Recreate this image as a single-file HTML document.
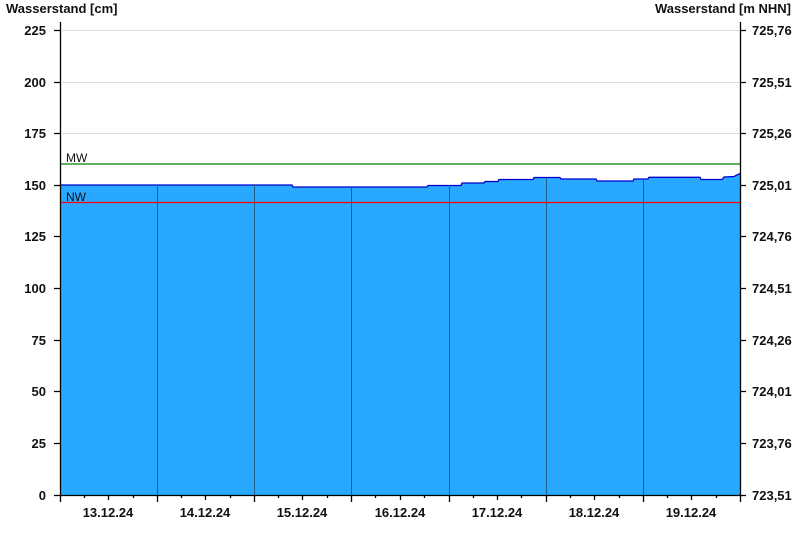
<!DOCTYPE html>
<html><head><style>body{margin:0;background:#fff}svg{display:block}text{font-family:"Liberation Sans",Arial,sans-serif;font-size:13px;font-weight:bold;fill:#111}</style></head><body>
<svg width="800" height="550" xmlns="http://www.w3.org/2000/svg">
<g stroke="#dcdcdc" stroke-width="1">
<line x1="60" x2="740" y1="30.5" y2="30.5"/><line x1="60" x2="740" y1="82.5" y2="82.5"/><line x1="60" x2="740" y1="133.5" y2="133.5"/>
</g>
<path d="M60,185 L292,185 L293,187 L427,187 L428,185.5 L461,185.5 L462,183 L484,183 L485,181.5 L498,181.5 L499,179.5 L533,179.5 L534,177.5 L560,177.5 L561,179 L596,179 L597,181 L633,181 L634,179 L648,179 L649,177.3 L700,177.3 L701,179.5 L722,179.5 L724,177 L734,176.5 L740,173.5 L740,495 L60,495 Z" fill="#29a8ff"/>
<path d="M60,185 L292,185 L293,187 L427,187 L428,185.5 L461,185.5 L462,183 L484,183 L485,181.5 L498,181.5 L499,179.5 L533,179.5 L534,177.5 L560,177.5 L561,179 L596,179 L597,181 L633,181 L634,179 L648,179 L649,177.3 L700,177.3 L701,179.5 L722,179.5 L724,177 L734,176.5 L740,173.5" fill="none" stroke="#0000cc" stroke-width="1.3"/>
<g stroke="#1f5f8a" stroke-width="1">
<line x1="157.5" x2="157.5" y1="185" y2="495"/><line x1="254.5" x2="254.5" y1="185" y2="495"/><line x1="351.5" x2="351.5" y1="187" y2="495"/><line x1="449.5" x2="449.5" y1="185" y2="495"/><line x1="546.5" x2="546.5" y1="178" y2="495"/><line x1="643.5" x2="643.5" y1="180" y2="495"/>
</g>
<line x1="60" x2="740" y1="164" y2="164" stroke="#008000" stroke-width="1.3"/>
<line x1="60" x2="740" y1="202.5" y2="202.5" stroke="#ff0000" stroke-width="1.3"/>
<text x="66" y="162" style="font-weight:normal;font-size:12px">MW</text>
<text x="66" y="201" style="font-weight:normal;font-size:12px">NW</text>
<g stroke="#000" stroke-width="1.3">
<line x1="60.5" x2="60.5" y1="22" y2="502"/><line x1="740.5" x2="740.5" y1="22" y2="495"/><line x1="54" x2="740" y1="495.5" y2="495.5"/>
<path d="M54,30.5h6M54,82.5h6M54,133.5h6M54,185.5h6M54,236.5h6M54,288.5h6M54,340.5h6M54,391.5h6M54,443.5h6M740,30.5h6M740,82.5h6M740,133.5h6M740,185.5h6M740,236.5h6M740,288.5h6M740,340.5h6M740,391.5h6M740,443.5h6M740,495.5h6"/>
<path d="M157.5,495v7M254.5,495v7M351.5,495v7M449.5,495v7M546.5,495v7M643.5,495v7M740.5,495v7"/>
<path d="M84.5,495v3M108.5,495v5M133.5,495v3M181.5,495v3M205.5,495v5M230.5,495v3M278.5,495v3M302.5,495v5M327.5,495v3M375.5,495v3M400.5,495v5M424.5,495v3M473.5,495v3M497.5,495v5M521.5,495v3M570.5,495v3M594.5,495v5M619.5,495v3M667.5,495v3M691.5,495v5M716.5,495v3"/>
</g>
<text x="6" y="13">Wasserstand [cm]</text>
<text x="791" y="13" text-anchor="end">Wasserstand [m NHN]</text>
<g text-anchor="end">
<text x="46" y="35">225</text><text x="46" y="87">200</text><text x="46" y="138">175</text><text x="46" y="190">150</text><text x="46" y="241">125</text><text x="46" y="293">100</text><text x="46" y="345">75</text><text x="46" y="396">50</text><text x="46" y="448">25</text><text x="46" y="500">0</text>
</g>
<g>
<text x="752" y="35">725,76</text><text x="752" y="87">725,51</text><text x="752" y="138">725,26</text><text x="752" y="190">725,01</text><text x="752" y="241">724,76</text><text x="752" y="293">724,51</text><text x="752" y="345">724,26</text><text x="752" y="396">724,01</text><text x="752" y="448">723,76</text><text x="752" y="500">723,51</text>
</g>
<g text-anchor="middle">
<text x="108" y="517">13.12.24</text><text x="205" y="517">14.12.24</text><text x="302" y="517">15.12.24</text><text x="400" y="517">16.12.24</text><text x="497" y="517">17.12.24</text><text x="594" y="517">18.12.24</text><text x="691" y="517">19.12.24</text>
</g>
</svg>
</body></html>
